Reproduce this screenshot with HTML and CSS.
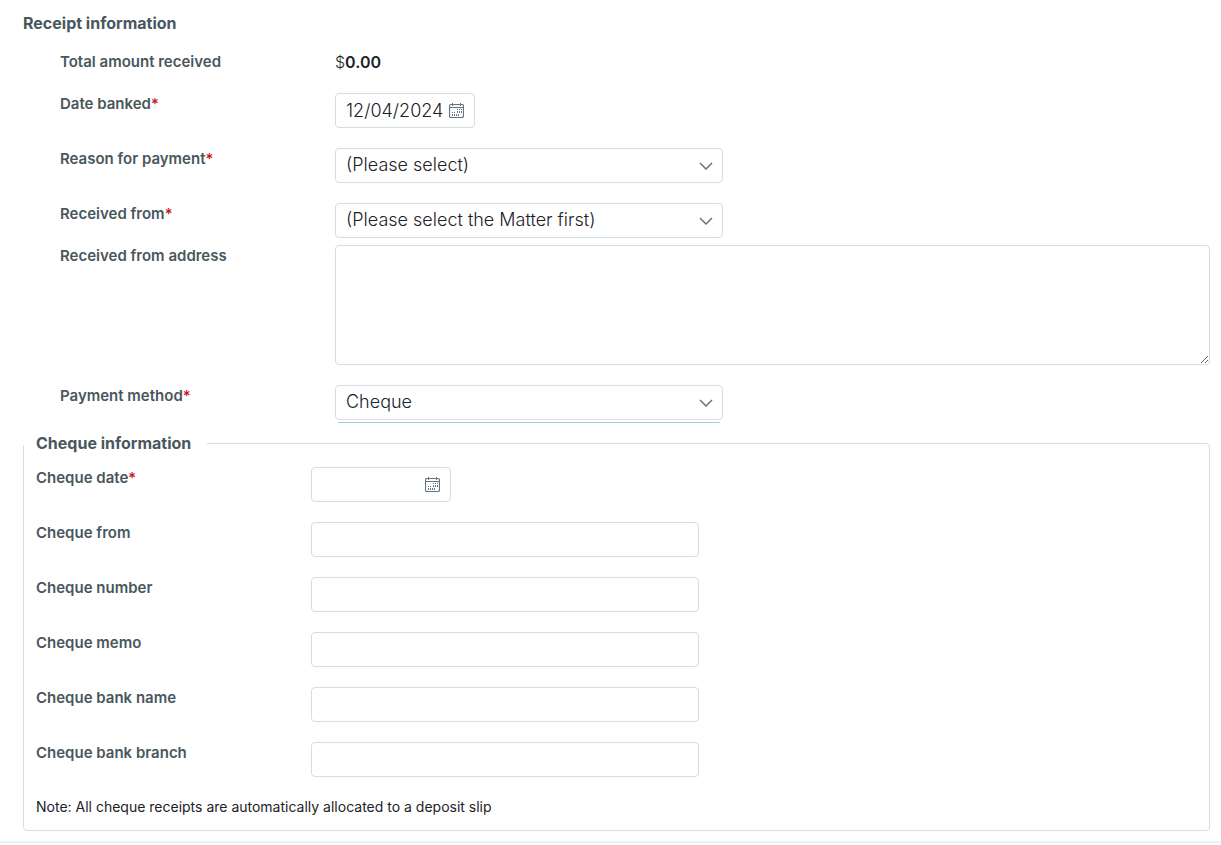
FILE: index.html
```html
<!DOCTYPE html>
<html lang="en">
<head>
  <meta charset="UTF-8">
  <meta name="viewport" content="width=device-width, initial-scale=1.0">
  <title>Receipt information</title>
  <link rel="stylesheet" href="styles.css">
</head>
<body>
  <!-- Shared icons -->
  <svg class="icon-sprite" aria-hidden="true">
    <symbol id="calendar" viewBox="0 0 15 15">
      <path d="M3.5 0v3M11.5 0v3" stroke="currentColor" fill="none"/>
      <rect x="0.5" y="1.5" width="14" height="13" rx="1.5" fill="none" stroke="currentColor" stroke-width="1.2"/>
      <path d="M1 4.5h13" stroke="currentColor"/>
      <path d="M8 6h1v1H8zM10 6h1v1h-1zM12 6h1v1h-1zM3 9h1v1H3zM5 9h1v1H5zM8 8h1v2H8zM10 8h1v2h-1zM12 8h1v2h-1zM3 11h1v2H3zM5 11h1v2H5zM7 11h1v2H7zM9 11h1v2H9z" fill="currentColor"/>
    </symbol>
    <symbol id="chevron" viewBox="0 0 14 8">
      <path d="M1 1l6 6 6-6" fill="none" stroke="currentColor" stroke-width="1.5"/>
    </symbol>
  </svg>

  <form class="receipt-form">
    <h2 class="section-title">Receipt information</h2>

    <div class="receipt-rows">
      <div class="form-row">
        <span class="form-label">Total amount received</span>
        <div class="amount">$<strong>0.00</strong></div>
      </div>
      <div class="form-row">
        <label class="form-label" for="date-banked">Date banked<span class="required">*</span></label>
        <div class="date-field">
          <input class="control" type="text" id="date-banked" value="12/04/2024">
          <button class="date-button" type="button" aria-label="Choose date banked"><svg class="calendar-icon"><use href="#calendar"/></svg></button>
        </div>
      </div>
      <div class="form-row">
        <label class="form-label" for="reason">Reason for payment<span class="required">*</span></label>
        <div class="select-field">
          <select class="control" id="reason"><option>(Please select)</option></select>
          <svg class="chevron-icon"><use href="#chevron"/></svg>
        </div>
      </div>
      <div class="form-row received-row">
        <label class="form-label" for="received-from">Received from<span class="required">*</span></label>
        <div class="select-field">
          <select class="control" id="received-from"><option>(Please select the Matter first)</option></select>
          <svg class="chevron-icon"><use href="#chevron"/></svg>
        </div>
      </div>
      <div class="form-row">
        <label class="form-label" for="address">Received from address</label>
        <textarea class="control address" id="address"></textarea>
      </div>
      <div class="form-row method-row">
        <label class="form-label" for="method">Payment method<span class="required">*</span></label>
        <div class="select-field active">
          <select class="control" id="method"><option>Cheque</option></select>
          <svg class="chevron-icon"><use href="#chevron"/></svg>
        </div>
      </div>
    </div>

    <fieldset class="cheque-info">
      <legend class="section-title">Cheque information</legend>
      <div class="form-row">
        <label class="form-label" for="cheque-date">Cheque date<span class="required">*</span></label>
        <div class="date-field">
          <input class="control" type="text" id="cheque-date">
          <button class="date-button" type="button" aria-label="Choose cheque date"><svg class="calendar-icon"><use href="#calendar"/></svg></button>
        </div>
      </div>
      <div class="form-row">
        <label class="form-label" for="cheque-from">Cheque from</label>
        <input class="control text-field" type="text" id="cheque-from">
      </div>
      <div class="form-row">
        <label class="form-label" for="cheque-number">Cheque number</label>
        <input class="control text-field" type="text" id="cheque-number">
      </div>
      <div class="form-row">
        <label class="form-label" for="cheque-memo">Cheque memo</label>
        <input class="control text-field" type="text" id="cheque-memo">
      </div>
      <div class="form-row">
        <label class="form-label" for="bank-name">Cheque bank name</label>
        <input class="control text-field" type="text" id="bank-name">
      </div>
      <div class="form-row">
        <label class="form-label" for="bank-branch">Cheque bank branch</label>
        <input class="control text-field" type="text" id="bank-branch">
      </div>
      <p class="note">Note: All cheque receipts are automatically allocated to a deposit slip</p>
    </fieldset>
  </form>
</body>
</html>
```
FILE: styles.css
```css
* {
  box-sizing: border-box;
}

body {
  margin: 0;
  background: #fff;
  color: #1b2228;
  font-family: Inter, "Liberation Sans", sans-serif;
}

.icon-sprite {
  display: none;
}

.receipt-form {
  padding: 13px 11px 10px 23px;
  border-bottom: 2px solid #edf1f5;
}

.section-title {
  margin: 0;
  color: #48575d;
  font-size: 16px;
  font-weight: 700;
  line-height: 20px;
}

.receipt-rows {
  padding: 18px 0 0 37px;
}

.form-row {
  display: grid;
  grid-template-columns: 275px 1fr;
  align-items: start;
  margin-bottom: 20px;
}

.form-label {
  color: #48575d;
  font-size: 15px;
  font-weight: 600;
  line-height: 22px;
}

.required {
  color: #cc1122;
  font-weight: 500;
}

.amount {
  font-size: 16px;
  font-weight: 300;
  line-height: 22px;
}

.amount strong {
  font-weight: 600;
}

.control {
  display: block;
  width: 100%;
  height: 35px;
  margin: 0;
  padding: 0 10px;
  border: 1px solid #d3dee4;
  border-radius: 4px;
  background: #fff;
  color: #1b2228;
  font-family: inherit;
  font-size: 18px;
  font-weight: 300;
  appearance: none;
}

.date-field {
  position: relative;
  width: 140px;
}

.date-button {
  position: absolute;
  top: 10px;
  right: 11px;
  padding: 0;
  border: none;
  background: none;
  color: #647480;
  cursor: pointer;
}

.calendar-icon {
  display: block;
  width: 15px;
  height: 15px;
}

.select-field {
  position: relative;
  width: 100%;
  max-width: 388px;
}

.select-field .control {
  padding-bottom: 2px;
}

.chevron-icon {
  position: absolute;
  top: 14px;
  right: 10px;
  width: 14px;
  height: 8px;
  color: #647480;
  pointer-events: none;
}

/* Teal underline of the focused drop-down */
.select-field.active::after {
  content: "";
  position: absolute;
  right: 3px;
  bottom: -3px;
  left: 3px;
  height: 1px;
  background: #9fcfd3;
}

.text-field {
  max-width: 388px;
}

.received-row {
  margin-bottom: 7px;
}

.method-row {
  margin-bottom: 13px;
}

.address {
  height: 120px;
  resize: vertical;
}

.cheque-info {
  margin: 0;
  padding: 14px 12px 13px;
  border: 1px solid #dadcdd;
  border-radius: 4px;
}

.cheque-info .section-title {
  margin-left: -12px;
  padding: 0 16px 0 12px;
}

.note {
  margin: 0;
  font-size: 14px;
  line-height: 20px;
}
```
